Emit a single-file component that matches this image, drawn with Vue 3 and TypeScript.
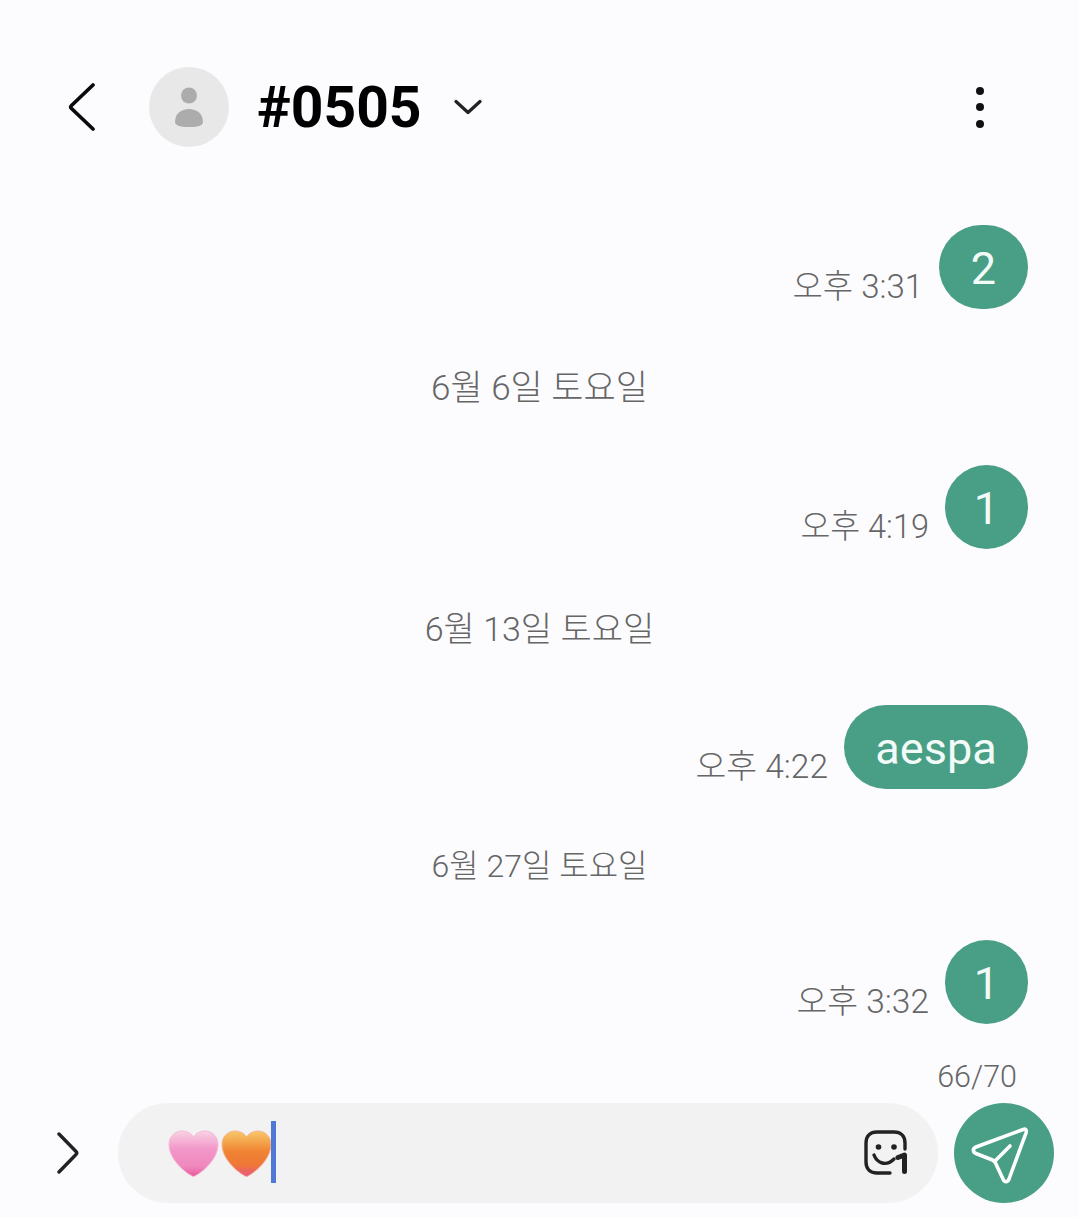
<script setup lang="ts">
type Item =
  | { kind: 'date'; text: string; gap: number; size: number }
  | { kind: 'msg'; time: string; body: string; gap: number; size: number; width: number }

const items: Item[] = [
  { kind: 'msg', time: '오후 3:31', body: '2', gap: 0, size: 33, width: 89 },
  { kind: 'date', text: '6월 6일 토요일', gap: 60, size: 35 },
  { kind: 'msg', time: '오후 4:19', body: '1', gap: 56, size: 32.5, width: 83 },
  { kind: 'date', text: '6월 13일 토요일', gap: 60, size: 34 },
  { kind: 'msg', time: '오후 4:22', body: 'aespa', gap: 56, size: 33.5, width: 184 },
  { kind: 'date', text: '6월 27일 토요일', gap: 57, size: 32 },
  { kind: 'msg', time: '오후 3:32', body: '1', gap: 54, size: 33.5, width: 83 },
]
</script>

<template>
  <div class="screen">
    <header class="top">
      <svg class="back" width="28" height="50" viewBox="0 0 28 50" fill="none">
        <path d="M25 3 L3.5 23.5 Q2 25 3.5 26.5 L25 47" stroke="#0a0a0a" stroke-width="3.7" stroke-linecap="round" stroke-linejoin="round" />
      </svg>
      <div class="avatar">
        <svg width="30" height="42" viewBox="0 0 30 42">
          <circle cx="15" cy="8.5" r="8" fill="#acacac" />
          <path d="M1 35 C1 27 7 22 15 22 C23 22 29 27 29 35 C29 38 25 40 15 40 C5 40 1 38 1 35 Z" fill="#acacac" />
        </svg>
      </div>
      <h1 class="title">#0505</h1>
      <svg class="caret" width="28" height="16" viewBox="0 0 28 16" fill="none">
        <path d="M2 2.5 L14 13.5 L26 2.5" stroke="#222" stroke-width="3.2" stroke-linecap="round" stroke-linejoin="round" />
      </svg>
      <div class="more"><i></i><i></i><i></i></div>
    </header>

    <main class="thread">
      <template v-for="(item, i) in items" :key="i">
        <div v-if="item.kind === 'date'" class="date" :style="{ marginTop: item.gap + 'px', fontSize: item.size + 'px' }">{{ item.text }}</div>
        <div v-else class="row" :style="{ marginTop: item.gap + 'px' }">
          <span class="time" :style="{ fontSize: item.size + 'px' }">{{ item.time }}</span>
          <div class="bubble" :style="{ width: item.width + 'px' }">{{ item.body }}</div>
        </div>
      </template>
    </main>

    <div class="counter">66/70</div>

    <footer class="composer">
      <svg class="expand" width="24" height="42" viewBox="0 0 24 42" fill="none">
        <path d="M3 2 L20 19.5 Q21.5 21 20 22.5 L3 40" stroke="#222" stroke-width="3.4" stroke-linecap="round" stroke-linejoin="round" />
      </svg>
      <div class="field">
        <svg class="heart" width="53" height="50" viewBox="0 0 53 50">
          <defs>
            <linearGradient id="pink" x1="0" y1="0" x2="0" y2="1">
              <stop offset="0" stop-color="#f9d3e4" />
              <stop offset="0.4" stop-color="#f297c9" />
              <stop offset="0.78" stop-color="#ef88bd" />
              <stop offset="1" stop-color="#e9589a" />
            </linearGradient>
            <linearGradient id="orange" x1="0" y1="0" x2="0" y2="1">
              <stop offset="0" stop-color="#f8c868" />
              <stop offset="0.45" stop-color="#f08433" />
              <stop offset="0.75" stop-color="#ee7736" />
              <stop offset="1" stop-color="#e9568a" />
            </linearGradient>
          </defs>
          <path d="M26.5 47.5 C24 47.5 2 33 2 15.5 C2 7 8.5 2 15 2 C20 2 24.5 4.5 26.5 8 C28.5 4.5 33 2 38 2 C44.5 2 51 7 51 15.5 C51 33 29 47.5 26.5 47.5 Z" fill="url(#pink)" stroke="#f7b9d8" stroke-width="1" />
        </svg>
        <svg class="heart second" width="53" height="50" viewBox="0 0 53 50">
          <path d="M26.5 47.5 C24 47.5 2 33 2 15.5 C2 7 8.5 2 15 2 C20 2 24.5 4.5 26.5 8 C28.5 4.5 33 2 38 2 C44.5 2 51 7 51 15.5 C51 33 29 47.5 26.5 47.5 Z" fill="url(#orange)" stroke="#f5b49a" stroke-width="1" />
        </svg>
        <span class="caret-bar"></span>
        <svg class="sticker" width="48" height="46" viewBox="0 0 48 46" fill="none">
          <path d="M26 43 H13 C6 43 2 39 2 32 V13 C2 6 6 2 13 2 H30 C37 2 41 6 41 13 V19" stroke="#222" stroke-width="3.4" stroke-linecap="round" />
          <circle cx="14.5" cy="17" r="2.8" fill="#222" />
          <circle cx="30" cy="17" r="2.8" fill="#222" />
          <path d="M10 25 C13 33 22 37 30 29" stroke="#222" stroke-width="3.4" stroke-linecap="round" />
          <path d="M34 27.5 L40.5 25 V41.5" stroke="#222" stroke-width="5" stroke-linecap="round" stroke-linejoin="round" />
        </svg>
      </div>
      <button class="send" type="button" aria-label="send">
        <svg width="100" height="100" viewBox="0 0 100 100" fill="none">
          <path d="M69 26.5 L22 44 C18.5 45.5 18.5 49 22 50.5 L38.5 57 C40 57.7 41 58.7 41.5 60 L49 76 C50.5 79.5 53.5 79.5 55 76 L72 30 C73 27 71.5 25.5 69 26.5 Z" stroke="#fff" stroke-width="3.6" stroke-linejoin="round" />
          <path d="M41 58 L56 43" stroke="#fff" stroke-width="3.6" stroke-linecap="round" />
        </svg>
      </button>
    </footer>
  </div>
</template>

<style>
html, body {
  margin: 0;
  background: #fcfcff;
}
</style>

<style scoped>
.screen {
  width: 1079px;
  height: 1217px;
  background: #fcfcff;
  font-family: Roboto, "Noto Sans CJK KR", sans-serif;
  overflow: hidden;
}
.top {
  display: flex;
  align-items: center;
  height: 80px;
  padding: 67px 95px 0 68px;
}
.back {
  margin-right: 53px;
}
.avatar {
  width: 80px;
  height: 80px;
  border-radius: 50%;
  background: #e8e8e8;
  display: flex;
  align-items: center;
  justify-content: center;
}
.avatar svg {
  margin-top: 2px;
}
.title {
  margin: 1px 0 0 28px;
  font-family: Roboto, "Liberation Sans", sans-serif;
  font-size: 57px;
  font-weight: 700;
  line-height: 80px;
  color: #000;
}
.caret {
  margin-left: 32px;
}
.more {
  display: flex;
  flex-direction: column;
  gap: 8.5px;
  margin-left: auto;
}
.more i {
  width: 8px;
  height: 8px;
  border-radius: 50%;
  background: #111;
}
.thread {
  display: flex;
  flex-direction: column;
  padding: 78px 51px 0 0;
}
.row {
  display: flex;
  justify-content: flex-end;
  align-items: flex-end;
  gap: 16px;
}
.time {
  line-height: 38px;
  font-weight: 300;
  color: #666;
  margin-bottom: 3px;
}
.bubble {
  height: 84px;
  box-sizing: border-box;
  border-radius: 42px;
  background: #499f85;
  color: #f2fbf8;
  font-size: 45px;
  line-height: 87px;
  text-align: center;
}
.date {
  margin-left: 51px;
  text-align: center;
  line-height: 40px;
  font-weight: 300;
  color: #666;
}
.counter {
  position: absolute;
  top: 1059px;
  right: 62px;
  font-size: 30.5px;
  font-weight: 300;
  line-height: 36px;
  color: #666;
}
.composer {
  position: absolute;
  left: 0;
  top: 1103px;
  width: 1079px;
  height: 100px;
  display: flex;
  align-items: center;
}
.expand {
  margin-left: 56px;
  margin-right: 38px;
}
.field {
  width: 820px;
  height: 100px;
  border-radius: 50px;
  background: #f2f2f2;
  display: flex;
  align-items: center;
  padding-left: 49px;
  box-sizing: border-box;
}
.heart {
  margin-top: 2px;
  flex: none;
}
.caret-bar {
  width: 5px;
  height: 62px;
  background: #4f79d6;
  margin-left: -2px;
  margin-top: -2px;
}
.sticker {
  margin-left: auto;
  margin-right: 26px;
}
.send {
  margin-left: 16px;
  width: 100px;
  height: 100px;
  padding: 0;
  border: 0;
  border-radius: 50%;
  background: #499f85;
  display: flex;
  align-items: center;
  justify-content: center;
}
</style>
